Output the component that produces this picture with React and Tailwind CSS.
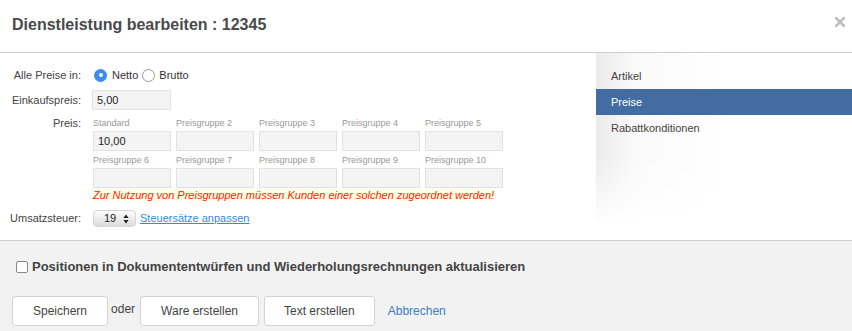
import React, { useState } from 'react';

const priceGroups = [
  ['Standard', '10,00'],
  ['Preisgruppe 2', ''],
  ['Preisgruppe 3', ''],
  ['Preisgruppe 4', ''],
  ['Preisgruppe 5', ''],
  ['Preisgruppe 6', ''],
  ['Preisgruppe 7', ''],
  ['Preisgruppe 8', ''],
  ['Preisgruppe 9', ''],
  ['Preisgruppe 10', '']
];

const tabs = ['Artikel', 'Preise', 'Rabattkonditionen'];

export default function App() {
  const [mode, setMode] = useState('netto');
  const [active, setActive] = useState('Preise');
  const [update, setUpdate] = useState(false);

  return (
    <div className="w-[852px] h-[331px] overflow-hidden bg-white font-['Liberation_Sans',Arial,sans-serif] text-[#444]">
      {/* Header */}
      <div className="h-[53px] border-b border-[#ccc] flex items-center justify-between pl-3 pr-[7px]">
        <h1 className="text-[16px] leading-[20px] font-bold text-[#4a4a4a] pb-[2px]">
          Dienstleistung bearbeiten : 12345
        </h1>
        <svg width="10" height="10" viewBox="0 0 10 10" className="mb-[8px]">
          <path d="M1 1 L9 9 M9 1 L1 9" stroke="#bdbdbd" strokeWidth="2.6" strokeLinecap="square" />
        </svg>
      </div>

      {/* Body */}
      <div className="flex h-[187px]">
        <div className="w-[596px] pt-[13px] text-[11px]">
          {/* Alle Preise */}
          <div className="flex items-center h-[18px]">
            <div className="w-[81px] text-right">Alle Preise in:</div>
            <div className="ml-[13px] flex items-center">
              <button
                onClick={() => setMode('netto')}
                className={
                  mode === 'netto'
                    ? 'w-[13px] h-[13px] rounded-full bg-[#3b8ded] flex items-center justify-center'
                    : 'w-[13px] h-[13px] rounded-full border border-[#9a9a9a] bg-white'
                }
              >
                {mode === 'netto' && <span className="w-[4px] h-[4px] rounded-full bg-white" />}
              </button>
              <span className="ml-[5px] text-[#333]">Netto</span>
              <button
                onClick={() => setMode('brutto')}
                className={
                  mode === 'brutto'
                    ? 'ml-[4px] w-[13px] h-[13px] rounded-full bg-[#3b8ded] flex items-center justify-center'
                    : 'ml-[4px] w-[13px] h-[13px] rounded-full border border-[#9a9a9a] bg-white'
                }
              >
                {mode === 'brutto' && <span className="w-[4px] h-[4px] rounded-full bg-white" />}
              </button>
              <span className="ml-[4px] text-[#333]">Brutto</span>
            </div>
          </div>

          {/* Einkaufspreis */}
          <div className="flex items-center mt-[6px]">
            <div className="w-[81px] text-right">Einkaufspreis:</div>
            <input
              className="ml-[11px] w-[79px] h-[20px] bg-[#f4f4f4] border border-[#e2e2e2] px-[4px] text-[11px] text-[#222] outline-none"
              defaultValue="5,00"
            />
          </div>

          {/* Preis */}
          <div className="flex items-start mt-[7px]">
            <div className="w-[81px] text-right leading-[12px]">Preis:</div>
            <div className="ml-[12px]">
              <div className="grid grid-cols-[repeat(5,78px)] gap-x-[5px] gap-y-[3px]">
                {priceGroups.map(([label, value]) => (
                  <div key={label}>
                    <div className="text-[9px] leading-[12px] text-[#999] mb-[2px]">{label}</div>
                    <input
                      className="w-[78px] h-[20px] bg-[#f4f4f4] border border-[#e2e2e2] px-[4px] text-[11px] text-[#222] outline-none"
                      defaultValue={value}
                    />
                  </div>
                ))}
              </div>
              <div className="mt-[1px] w-fit bg-[#ffffe6] text-[#ff2200] italic leading-[12px]">
                Zur Nutzung von Preisgruppen müssen Kunden einer solchen zugeordnet werden!
              </div>
            </div>
          </div>

          {/* Umsatzsteuer */}
          <div className="flex items-center mt-[9px]">
            <div className="w-[81px] text-right">Umsatzsteuer:</div>
            <div className="ml-[12px] w-[43px] h-[17px] rounded-[4px] border border-[#d6d6d6] bg-gradient-to-b from-[#fdfdfd] to-[#dcdcdc] flex items-center pl-[10px] pr-[6px] justify-between">
              <span className="text-[#222]">19</span>
              <svg width="6" height="10" viewBox="0 0 6 10">
                <path d="M3 0.5 L5.6 4 L0.4 4 Z M3 9.5 L5.6 6 L0.4 6 Z" fill="#222" />
              </svg>
            </div>
            <a href="#" className="ml-[4px] text-[#3b86d8] underline">Steuersätze anpassen</a>
          </div>
        </div>

        {/* Sidebar */}
        <div className="flex-1 pt-[10px] bg-[linear-gradient(to_bottom,rgba(255,255,255,0)_55%,#fff_92%),linear-gradient(to_right,#ebebeb,#fafafa_40px,#fff_135px)]">
          {tabs.map((t) => (
            <div
              key={t}
              onClick={() => setActive(t)}
              className={
                active === t
                  ? 'h-[26px] flex items-center pl-[15px] text-[11px] bg-[#436ca3] text-white cursor-pointer'
                  : 'h-[26px] flex items-center pl-[15px] text-[11px] text-[#444] cursor-pointer'
              }
            >
              {t}
            </div>
          ))}
        </div>
      </div>

      {/* Footer */}
      <div className="h-[91px] border-t border-[#ccc] bg-[#f2f2f2] pt-[18px] pl-[16px]">
        <label className="flex items-center h-[16px]">
          <input
            type="checkbox"
            checked={update}
            onChange={(e) => setUpdate(e.target.checked)}
            className="appearance-none w-[12px] h-[12px] rounded-[2px] border border-[#888] bg-white m-0"
          />
          <span className="ml-[4px] text-[13px] font-bold text-[#444]">
            Positionen in Dokumententwürfen und Wiederholungsrechnungen aktualisieren
          </span>
        </label>

        <div className="flex items-center mt-[21px] -ml-[4px] text-[12px]">
          <button className="h-[30px] px-[20px] bg-white border border-[#d4d4d4] rounded-[3px] text-[#444]">Speichern</button>
          <span className="ml-[3px] mr-[5px] mb-[4px] text-[#444]">oder</span>
          <button className="h-[30px] px-[20px] bg-white border border-[#d4d4d4] rounded-[3px] text-[#444]">Ware erstellen</button>
          <button className="ml-[5px] h-[30px] px-[19px] bg-white border border-[#d4d4d4] rounded-[3px] text-[#444]">Text erstellen</button>
          <a href="#" className="ml-[13px] text-[#3a80c8]">Abbrechen</a>
        </div>
      </div>
    </div>
  );
}
